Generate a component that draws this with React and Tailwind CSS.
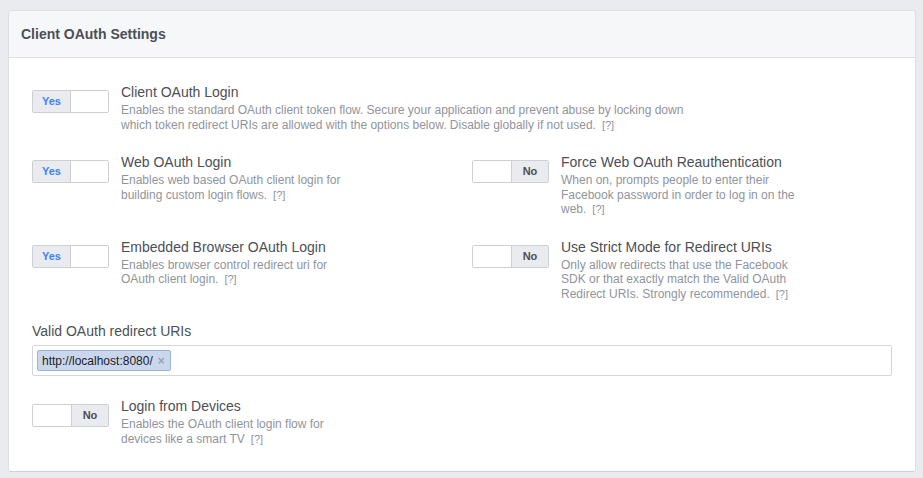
import React from "react";

function Toggle({ on }) {
  return (
    <div className="mt-[8px] flex h-[23px] w-[77px] shrink-0 overflow-hidden rounded-[2px] border border-[#ccd0d5] bg-white">
      {on ? (
        <>
          <div className="flex w-[38px] items-center justify-center border-r border-[#ccd0d5] bg-[#e9ebee] text-[11px] font-bold text-[#4080ff]">
            Yes
          </div>
          <div className="flex-1 bg-white" />
        </>
      ) : (
        <>
          <div className="w-[39px] border-r border-[#ccd0d5] bg-white" />
          <div className="flex flex-1 items-center justify-center bg-[#e9ebee] text-[11px] font-bold text-[#4b4f56]">
            No
          </div>
        </>
      )}
    </div>
  );
}

function Setting({ on, title, desc, wide, help = true }) {
  return (
    <div className="flex gap-3">
      <Toggle on={on} />
      <div className="min-w-0">
        <div className="text-[14px] leading-[20px] text-[#4b4f56]">{title}</div>
        <div
          className={
            "mt-[1px] text-[12px] leading-[14.5px] text-[#90949c] " +
            (wide ? "max-w-[585px]" : "max-w-[242px]")
          }
        >
          {desc}
          {help && <span className="ml-[6px] text-[11px] text-[#90949c]">[?]</span>}
        </div>
      </div>
    </div>
  );
}

export default function App() {
  return (
    <div
      className="min-h-[478px] bg-[#e9ebee] pl-2 pr-[7px] pt-[10px]"
      style={{ fontFamily: '"Liberation Sans", Arial, Helvetica, sans-serif' }}
    >
      <div className="overflow-hidden rounded-[3px] border border-[#dddfe2] border-b-[#d0d1d5] bg-white">
        <div className="flex h-[47px] items-center border-b border-[#dddfe2] bg-[#f6f7f9] px-3">
          <h2 className="text-[14px] font-bold leading-[20px] text-[#4b4f56]">Client OAuth Settings</h2>
        </div>
        <div className="grid grid-cols-2 gap-x-5 gap-y-5 px-[23px] pb-[25px] pt-[24px]">
          <div className="col-span-2">
            <Setting
              on
              wide
              title="Client OAuth Login"
              desc="Enables the standard OAuth client token flow. Secure your application and prevent abuse by locking down which token redirect URIs are allowed with the options below. Disable globally if not used."
            />
          </div>
          <Setting
            on
            title="Web OAuth Login"
            desc="Enables web based OAuth client login for building custom login flows."
          />
          <Setting
            on={false}
            title="Force Web OAuth Reauthentication"
            desc="When on, prompts people to enter their Facebook password in order to log in on the web."
          />
          <Setting
            on
            title="Embedded Browser OAuth Login"
            desc="Enables browser control redirect uri for OAuth client login."
          />
          <Setting
            on={false}
            title="Use Strict Mode for Redirect URIs"
            desc="Only allow redirects that use the Facebook SDK or that exactly match the Valid OAuth Redirect URIs. Strongly recommended."
          />
          <div className="col-span-2">
            <div className="text-[14px] leading-[20px] text-[#4b4f56]">Valid OAuth redirect URIs</div>
            <div className="mt-1 flex h-[31px] items-center rounded-[2px] border border-[#d3d6db] bg-white px-1">
              <span className="flex h-[21px] items-center gap-[5px] rounded-[2px] border border-[#9cb4d8] bg-[#c9d6ec] pl-[4px] pr-[5px] text-[12px] text-[#1d2129]">
                http://localhost:8080/
                <span className="text-[12px] font-bold leading-none text-[#9aa5b5]">×</span>
              </span>
            </div>
          </div>
          <Setting
            on={false}
            title="Login from Devices"
            desc="Enables the OAuth client login flow for devices like a smart TV"
          />
        </div>
      </div>
    </div>
  );
}
